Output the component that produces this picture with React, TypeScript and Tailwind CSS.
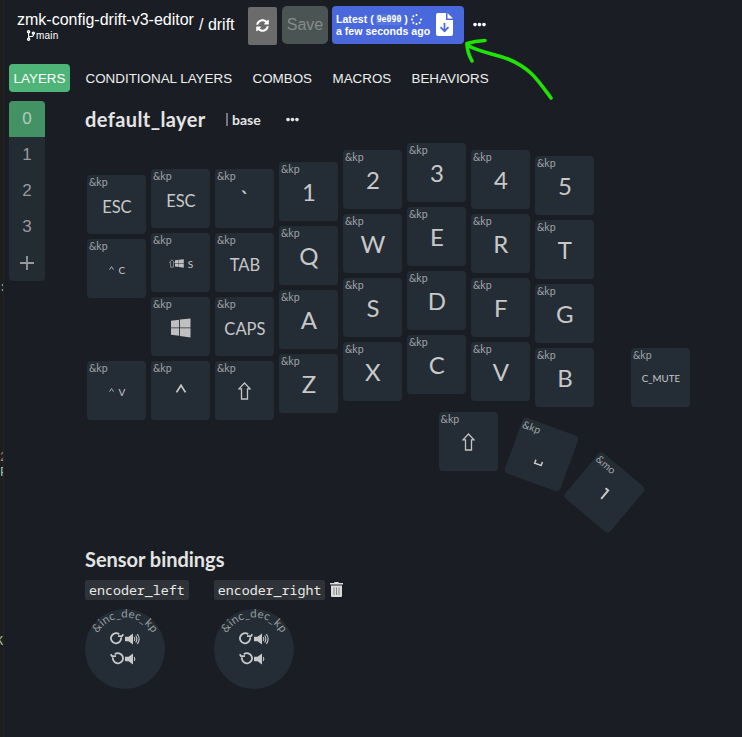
import React from 'react';
import { FaSyncAlt, FaCodeBranch, FaEllipsisH, FaSpinner } from 'react-icons/fa';

const WindowsLogo = ({ className }: { className: string }) => (
  <svg className={className} viewBox="0 0 21 20" fill="#c0c0c0">
    <path d="M0 2.5 8.5 1.3V9.4H0zM9.4 1.2 20.5 0V9.4H9.4zM0 10.3H8.5V18.2L0 17zM9.4 10.3H20.5V20L9.4 18.3z" />
  </svg>
);

const Shift = ({ className }: { className: string }) => (
  <svg className={className} viewBox="0 0 13 18" fill="none" stroke="#c4c4c4" strokeWidth="1.3">
    <path d="M6.5 1 12 6.8H9.5V17H3.5V6.8H1z" />
  </svg>
);

const Caret = ({ className }: { className: string }) => (
  <svg className={className} viewBox="0 0 12 10" fill="none" stroke="#c8c8c8" strokeWidth="2">
    <path d="M1 9.3 6 1.5 11 9.3" />
  </svg>
);

type KeyProps = { label: React.ReactNode; size?: 'lg' | 'md' | 'sm'; kind?: string; className?: string };

function Key({ label, size = 'lg', kind = '&kp', className = '' }: KeyProps) {
  const sizes = { lg: 'text-[24px] pt-px', md: 'text-[16.5px] pt-[5px]', sm: 'text-[10px] pt-[2px]' };
  return (
    <div className={`grid h-[59px] w-[59px] shrink-0 rounded-[4px] bg-[#242d36] text-[#c8c8c8] ${className}`}>
      <span className="col-start-1 row-start-1 pl-[1.5px] pt-px text-[10.5px] leading-[13px] text-[#a0a3a6]">{kind}</span>
      <span className={`col-start-1 row-start-1 flex items-center justify-center whitespace-nowrap leading-none ${sizes[size]}`}>{label}</span>
    </div>
  );
}

const columns: { pad: string; keys: (KeyProps | null)[] }[] = [
  {
    pad: 'pt-[32px]',
    keys: [
      { label: 'ESC', size: 'md' },
      { label: <span className="flex items-center gap-[5px]"><Caret className="mb-[3px] h-[4px] w-[5px]" />C</span>, size: 'sm' },
      null,
      { label: <span className="flex items-center gap-[5px]"><Caret className="mb-[3px] h-[4px] w-[5px]" />V</span>, size: 'sm' },
    ],
  },
  {
    pad: 'pt-[26px]',
    keys: [
      { label: 'ESC', size: 'md' },
      { label: <span className="flex items-center"><Shift className="h-[9px] w-[6px]" /><WindowsLogo className="mr-[4px] h-[9px] w-[9px]" />S</span>, size: 'sm' },
      { label: <WindowsLogo className="h-[20px] w-[20px]" />, size: 'sm' },
      { label: <Caret className="mb-[7px] h-[9px] w-[12px]" />, size: 'sm' },
    ],
  },
  {
    pad: 'pt-[26px]',
    keys: [
      { label: '`' },
      { label: 'TAB', size: 'md' },
      { label: 'CAPS', size: 'md' },
      { label: <Shift className="h-[18px] w-[13px]" /> },
    ],
  },
  { pad: 'pt-[19px]', keys: [{ label: '1' }, { label: 'Q' }, { label: 'A' }, { label: 'Z' }] },
  { pad: 'pt-[7px]', keys: [{ label: '2' }, { label: 'W' }, { label: 'S' }, { label: 'X' }] },
  { pad: 'pt-0', keys: [{ label: '3' }, { label: 'E' }, { label: 'D' }, { label: 'C' }] },
  { pad: 'pt-[7px]', keys: [{ label: '4' }, { label: 'R' }, { label: 'F' }, { label: 'V' }] },
  { pad: 'pt-[13px]', keys: [{ label: '5' }, { label: 'T' }, { label: 'G' }, { label: 'B' }] },
];

function Keyboard() {
  return (
    <div className="relative h-[400px] pl-[87.4px] font-['Lato',sans-serif]">
      <div className="flex gap-[5px]">
        {columns.map((c, i) => (
          <div key={i} className={`flex flex-col gap-[5px] ${c.pad}`}>
            {c.keys.map((k, j) => (k ? <Key key={j} {...k} /> : <div key={j} className="h-[53px]" />))}
          </div>
        ))}
        <div className="ml-[32px] pt-[205px]">
          <Key label={<span className="pt-px text-[9.7px]">C_MUTE</span>} size="sm" />
        </div>
      </div>
      <Key className="absolute left-[439px] top-[269px]" label={<Shift className="h-[18px] w-[13px]" />} />
      <Key
        className="absolute left-[511.7px] top-[282.3px] rotate-[20deg]"
        label={<svg className="mt-[16px] h-[5px] w-[9px]" viewBox="0 0 9 5" fill="none" stroke="#c8c8c8" strokeWidth="1.6"><path d="M1 0V4H8V0" /></svg>}
      />
      <Key
        className="absolute left-[575.2px] top-[319.8px] rotate-[40deg]"
        kind="&mo"
        label={
          <svg className="h-[13px] w-[6px]" viewBox="0 0 6 13" fill="none" stroke="#c8c8c8" strokeWidth="2">
            <path d="M.5 1.5H4V12.5" />
          </svg>
        }
      />
    </div>
  );
}

function Rotate({ back = false }: { back?: boolean }) {
  return (
    <svg className="h-[13px] w-[14px]" viewBox="0 0 14 13" fill="none" stroke="#c8c8c8" strokeWidth="1.8">
      <g transform={back ? 'matrix(-1 0 0 1 14 0)' : undefined}>
        <path d="M9.2 2.2A5.1 5.1 0 1 0 11.1 5.4" />
        <path d="M8 4.2 12 4.2 13.3 2.2" />
      </g>
    </svg>
  );
}

function Volume({ high = false }: { high?: boolean }) {
  return (
    <svg className="h-[12px] w-[15px]" viewBox="0 0 15 12" fill="none" stroke="#c8c8c8" strokeWidth="1.1">
      <path d="M0 3.8H3.5L8 .4V11.6L3.5 8.2H0z" fill="#c8c8c8" stroke="none" />
      <path d="M9.2 4Q10.5 6 9.2 8" />
      {high && <path d="M10.7 2.5Q13 6 10.7 9.5M12.3 1Q16 6 12.3 11" />}
    </svg>
  );
}

const Trash = () => (
  <svg className="mb-px ml-[5px] h-[15px] w-[13px]" viewBox="0 0 13 15">
    <path d="M0 1H4L4.6 0H8.4L9 1H13V2.6H0zM1 3.6H12V14Q12 15 11 15H2Q1 15 1 14z" fill="#dcdcdc" />
    <path d="M4 5.4V13M6.5 5.4V13M9 5.4V13" stroke="#777a7d" strokeWidth=".9" />
  </svg>
);

function Encoder({ name, id, trash = false }: { name: string; id: string; trash?: boolean }) {
  return (
    <div>
      <div className="flex items-center">
        <code className="flex h-5 items-center rounded-[2px] bg-[#2f3337] px-[4px] pt-px font-['Noto_Sans_Mono','DejaVu_Sans_Mono',monospace] text-[13.3px] text-[#e8e8e8]">
          {name}
        </code>
        {trash && <Trash />}
      </div>
      <div className="mt-[9px] grid h-20 w-20 rounded-full bg-[#242d36]">
        <svg className="col-start-1 row-start-1 h-20 w-20" viewBox="0 0 80 80">
          <path id={id} d="M8.5 40A31.5 31.5 0 0 1 71.5 40" fill="none" />
          <text fill="#999d9f" fontFamily="Lato, sans-serif" fontSize="11.5" textAnchor="middle">
            <textPath href={`#${id}`} startOffset="50%" textLength="66">&amp;inc_dec_kp</textPath>
          </text>
        </svg>
        <div className="col-start-1 row-start-1 flex flex-col gap-[7px] pl-[25px] pt-[23px]">
          <div className="flex items-center gap-px"><Rotate /><Volume high /></div>
          <div className="flex items-center gap-px"><Rotate back /><Volume /></div>
        </div>
      </div>
    </div>
  );
}

export default function App() {
  return (
    <div className="flex h-[737px] w-[742px] overflow-hidden bg-[#1a1e24] font-['Liberation_Sans',Arial,sans-serif]">
      <aside className="h-full w-[4px] shrink-0 overflow-hidden border-r border-[#24251f] bg-[#1e1e1e] font-['Liberation_Mono',monospace] text-[12px] leading-[15px]">
        <div className="-ml-px mt-[281px] text-[#999]">:</div>
        <div className="mt-[155px] text-[#c58670]">2</div>
        <div className="text-[#a5c8b8]">F</div>
        <div className="-ml-[4px] mt-[154px] text-[#a5c8b8]">K</div>
      </aside>
      <main className="relative -ml-[4px] w-[742px] shrink-0 text-white">
        <header className="flex h-[64px] pl-[17px]">
          <div className="w-[182px] pt-[10px]">
            <div className="whitespace-nowrap text-[16px] leading-[19px]">zmk-config-drift-v3-editor</div>
            <div className="flex items-center pl-[9px] text-[10px] leading-[11px]">
              <FaCodeBranch className="h-[11px] w-[10px]" /><span className="pt-px tracking-[.2px]">main</span>
            </div>
          </div>
          <div className="w-[49px] whitespace-nowrap pt-[15px] text-[16px] leading-[19px]">/ drift</div>
          <button className="mt-[7px] flex h-[38px] w-[29px] items-center justify-center rounded-[2px] bg-[#6b6b6b] pb-[2px]">
            <FaSyncAlt className="h-[13px] w-[13px]" />
          </button>
          <button className="ml-[5px] mt-[6px] h-[38px] w-[46px] rounded-[5px] bg-[#4a5452] text-[16px] text-[#858b8a]">Save</button>
          <button className="ml-[4px] mt-[6px] flex h-[38px] w-[132px] items-center rounded-[4px] bg-[#4868dc] pl-[4px] text-left">
            <span className="w-[100px] whitespace-nowrap text-[10.6px] font-bold leading-[12px]">
              <span className="flex items-center">
                Latest (<code className="mx-[2px] rounded-[2px] bg-[#5876df] px-px font-['DejaVu_Sans_Mono',monospace] text-[8.2px] font-bold leading-[11px]">9e090</code>)
                <FaSpinner className="ml-[3px] h-[11px] w-[11px]" />
              </span>
              a few seconds ago
            </span>
            <svg className="mb-px h-[23px] w-[17px]" viewBox="0 0 17 23">
              <path d="M2 0H10V7H17V21Q17 23 15 23H2Q0 23 0 21V2Q0 0 2 0zM11.5 0 17 5.5H11.5z" fill="#fff" />
              <path d="M8.5 10V18M4.5 14.2 8.5 18.2 12.5 14.2" stroke="#4868dc" strokeWidth="1.7" fill="none" />
            </svg>
          </button>
          <FaEllipsisH className="ml-[9px] mt-[18px] h-[13px] w-[13px]" />
        </header>
        <nav className="flex h-[28px] items-center pl-[9px] pt-px text-[13.4px] text-[#eeeeee]">
          <span className="-mt-px mr-[15.5px] flex h-[28px] w-[61px] items-center justify-center rounded-[4px] bg-[#4fb477] pt-[2px] text-white">LAYERS</span>
          <span className="w-[167px] pt-px">CONDITIONAL LAYERS</span>
          <span className="w-[80px] pt-px">COMBOS</span>
          <span className="w-[79px] pt-px">MACROS</span>
          <span className="pt-px">BEHAVIORS</span>
        </nav>
        <div className="flex">
          <ul className="-mr-[45px] ml-[9px] mt-[9px] h-[180px] w-[36px] shrink-0 overflow-hidden rounded-[4px] bg-[#232b33] text-center text-[17px] leading-[35px] text-[#979a9d]">
            <li className="h-[36px] bg-[#439264] text-[#b9c9bf]">0</li>
            <li className="h-[36px]">1</li>
            <li className="h-[36px]">2</li>
            <li className="h-[36px]">3</li>
            <li className="flex h-[36px] items-center justify-center">
              <svg className="h-[14px] w-[14px]" viewBox="0 0 14 14" stroke="#979a9d" strokeWidth="1.8"><path d="M0 7H14M7 0V14" /></svg>
            </li>
          </ul>
          <section className="w-full">
            <div className="flex h-[51px] items-center pb-px pl-[85px] pt-[4px] font-['Lato',sans-serif] font-bold text-[#e4e4e4]">
              <h2 className="w-[141px] text-[20px] tracking-[.4px]">default_layer</h2>
              <span className="h-[13px] w-[2px] bg-[#747679]" />
              <span className="ml-[4px] w-[54px] text-[14px]">base</span>
              <FaEllipsisH className="h-[13px] w-[13px]" />
            </div>
            <Keyboard />
            <div className="-mt-px pl-[85px] pt-[5px]">
              <h2 className="-mt-px font-['Lato',sans-serif] text-[20px] font-bold leading-[26px] tracking-[-.03px] text-[#e4e4e4]">Sensor bindings</h2>
              <div className="mt-[8px] flex gap-[25px]">
                <Encoder name="encoder_left" id="left-arc" />
                <Encoder name="encoder_right" id="right-arc" trash />
              </div>
            </div>
          </section>
        </div>
        <svg className="pointer-events-none absolute left-[460px] top-[30px] h-[75px] w-[100px]" viewBox="460 30 100 75" fill="none" stroke="#20e305" strokeWidth="3.6" strokeLinecap="round" strokeLinejoin="round">
          <path d="M551 98C537 79 530 68 508 59C493 53 481 53 467 45M485 40.5Q475 41 467 43.5Q467 52 472 61" />
        </svg>
      </main>
    </div>
  );
}
